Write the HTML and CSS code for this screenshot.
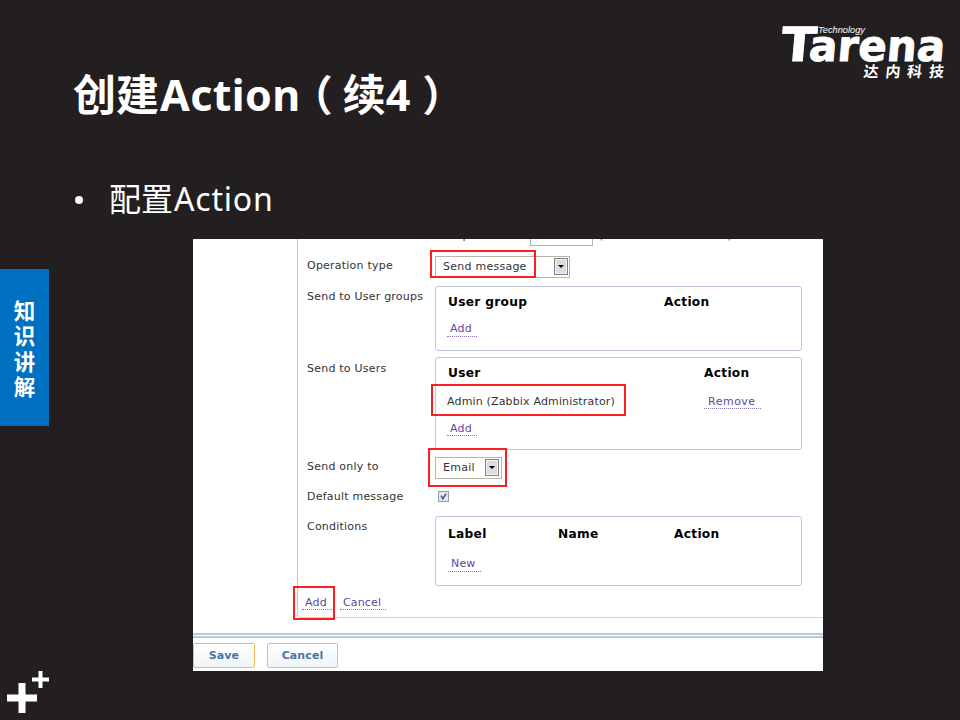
FILE: index.html
```html
<!DOCTYPE html>
<html lang="zh-CN">
<head>
<meta charset="utf-8">
<title>创建Action（续4）</title>
<link rel="stylesheet" href="styles.css">
</head>
<body>
<div class="slide">
  <header class="top">
    <div class="heading">
      <h1>创建<span class="latin">Action</span><span class="paren open">（</span>续4<span class="paren close">）</span></h1>
      <p class="bullet"><i class="dot"></i>配置<span>Action</span></p>
    </div>
    <svg class="logo" width="170" height="62" viewBox="0 0 170 62">
      <g fill="#fff">
        <g transform="translate(0 41) skewX(-5)">
          <text class="brand" x="-2" y="0" font-size="47" textLength="35" lengthAdjust="spacingAndGlyphs">T</text>
          <text class="brand" x="26" y="-.5" font-size="43" textLength="136" lengthAdjust="spacingAndGlyphs">arena</text>
        </g>
        <text class="tech" x="36" y="12.5" textLength="47" lengthAdjust="spacingAndGlyphs">Technology</text>
        <text class="cn" transform="translate(81 57) skewX(-6)" x="0 22 43.5 65.5" y="0">达内科技</text>
      </g>
    </svg>
  </header>
  <main class="middle">
    <aside class="tab"><span>知</span><span>识</span><span>讲</span><span>解</span></aside>
    <section class="panel">
      <div class="form">
        <div class="row step"><div class="cut"><span class="cut-label">Step duration</span><i class="input"></i><span class="cut-hint">(0 - use action default)</span></div></div>
        <div class="row line"><label>Operation type</label><div class="select wide"><span>Send message</span><i class="arrow"></i></div><b class="mark m-type"></b></div>
        <div class="row groups"><label>Send to User groups</label>
          <div class="box"><div class="cols c-groups"><strong>User group</strong><strong>Action</strong></div>
          <a class="link">Add</a></div></div>
        <div class="row users"><label>Send to Users</label>
          <div class="box"><div class="cols c-users"><strong>User</strong><strong>Action</strong></div>
          <div class="cols c-users entry"><span class="admin">Admin (Zabbix Administrator)</span><a class="link remove">Remove</a></div>
          <a class="link">Add</a></div><b class="mark m-user"></b></div>
        <div class="row line"><label>Send only to</label><div class="select"><span>Email</span><i class="arrow"></i></div><b class="mark m-mail"></b></div>
        <div class="row check"><label>Default message</label><svg class="tick" width="11" height="11" viewBox="0 0 11 11"><rect x=".5" y=".5" width="10" height="10" fill="#e5e8ec" stroke="#969da5"/><path d="M3 4.7 4.8 7.8 8.2 2.6" fill="none" stroke="#3e5ea5" stroke-width="1.6"/></svg></div>
        <div class="row conditions"><label>Conditions</label>
          <div class="box"><div class="cols c-cond"><strong>Label</strong><strong>Name</strong><strong>Action</strong></div>
          <a class="link new">New</a></div></div>
        <div class="row actions"><a class="link">Add</a><a class="link cancel">Cancel</a><b class="mark m-add"></b></div>
      </div>
      <div class="rule"></div>
      <div class="buttons"><button class="save">Save</button><button>Cancel</button></div>
    </section>
  </main>
  <footer>
    <svg width="60" height="49" viewBox="0 0 60 49"><path d="M7 27H37M22 12V42" stroke="#fff" stroke-width="7"/><path d="M32 8.5H49M40.5 0V17" stroke="#fff" stroke-width="4"/></svg>
  </footer>
</div>
</body>
</html>
```
FILE: styles.css
```css
* { box-sizing: border-box; }
body { margin: 0; background: #231f20; color: #fff; font-family: "Noto Sans", "Noto Sans CJK SC", sans-serif; }
.slide { width: 960px; height: 720px; overflow: hidden; }
.top { height: 239px; display: flex; justify-content: space-between; padding: 20px 12px 0 73px; }
h1 { margin: 43px 0 0; height: 64px; font-size: 43px; line-height: 64px; font-weight: 700; white-space: nowrap; }
.latin { margin-left: 1px; letter-spacing: .4px; }
.open { margin-left: -10px; margin-right: 10px; }
.close { margin-left: 12px; }
.paren { font-size: 42px; font-weight: 700; }
.bullet { display: flex; align-items: center; height: 50px; margin: 47px 0 0; font-size: 32px; line-height: 50px; font-weight: 400; }
.bullet span { margin-left: 1px; letter-spacing: .8px; }
.dot { width: 8px; height: 8px; border-radius: 50%; background: #fff; margin: 2px 26px 0 2px; }
.logo { overflow: visible; flex: none; margin-right: -4px; }
.brand { font-family: "DejaVu Sans", sans-serif; font-weight: 700; stroke: #fff; stroke-width: .9px; }
.tech { font: italic 400 9.5px "Liberation Sans", sans-serif; }
.cn { font: 700 15px "Noto Sans CJK SC", sans-serif; }
.middle { display: flex; height: 432px; }
.tab { display: flex; flex-direction: column; align-items: center; width: 49px; height: 157px; margin-top: 30px; padding-top: 28px; background: #0070c0; font: 700 21.5px/25.3px "Noto Sans CJK SC", sans-serif; }
.panel { width: 630px; height: 432px; margin-left: 144px; overflow: hidden; background: #fff; color: #333; font: 11px "DejaVu Sans", sans-serif; letter-spacing: .16px; }
.form { width: 530px; height: 379px; margin-left: 104px; border-left: 1px solid #bac4e3; border-bottom: 1px solid #cbd1e8; border-bottom-left-radius: 4px; }
.row { position: relative; display: grid; grid-template-columns: 137px 367px; align-items: start; }
.row label { padding: 1px 0 0 9px; line-height: 30px; letter-spacing: .22px; white-space: nowrap; }
.row.step { display: block; height: 12px; overflow: hidden; }
.cut { display: flex; margin-top: -12px; height: 19px; line-height: 17px; padding-left: 146px; white-space: nowrap; }
.cut-label { width: 86px; }
.input { width: 63px; height: 19px; border: 1px solid #b6b5a5; }
.cut-hint { margin-left: 6px; letter-spacing: .3px; }
.line { height: 30px; align-items: center; }
.line label { padding-top: 0; }
.groups { height: 71px; }
.users { height: 100px; }
.users label { padding-top: 2px; }
.check { height: 29px; }
.check label { padding-top: 0; }
.conditions { height: 76px; }
.select { display: flex; align-items: center; justify-content: space-between; width: 67px; height: 22px; margin-top: 1px; padding: 0 2px 0 7px; border: 1px solid #b6b5a5; line-height: 13px; }
.select span { letter-spacing: .25px; }
.wide { width: 135px; padding-right: 1px; }
.arrow { position: relative; width: 14px; height: 17px; border: 1px solid #7d8088; background: #dcdcdc; box-shadow: inset 0 0 0 1px #f4f4f4; }
.arrow::after { content: ""; position: absolute; left: 3px; top: 6px; border: 3px solid transparent; border-top-color: #000; border-bottom: 0; }
.box { height: 65px; margin-top: 5px; border: 1px solid #bdc6e3; border-radius: 3px; }
.users .box { height: 93px; }
.conditions .box { height: 70px; }
.cols { display: grid; padding-left: 12px; height: 31px; line-height: 31px; }
.cols strong { font-size: 12.2px; letter-spacing: .3px; color: #000; }
.c-groups { grid-template-columns: 216px 1fr; }
.c-users { grid-template-columns: 256px 1fr; }
.c-cond { grid-template-columns: 110px 116px 1fr; height: 35px; line-height: 35px; }
.entry { height: 25px; line-height: 25px; }
.admin { margin-left: -1px; }
.link { display: block; width: 30px; height: 16px; margin: 3px 0 0 11px; padding-left: 3px; border-bottom: 1px dotted #8577b5; color: #5b4a9b; line-height: 16px; }
.users .box > .link { margin-top: 6px; line-height: 17px; }
.entry .remove { width: 57px; margin: 4px 0 0 0; padding-left: 4px; letter-spacing: .5px; line-height: 17px; }
.new { width: 33px; margin: 4px 0 0 12px; }
.actions { display: flex; }
.actions .link { margin: 7px 0 0 4px; line-height: 17px; }
.actions .cancel { width: 46px; margin-left: 8px; }
.tick { margin: 9px 0 0 3px; }
.mark { position: absolute; border: 2px solid #fb1d20; }
.m-type { left: 132px; top: -1px; width: 106px; height: 28px; }
.m-user { left: 133px; top: 32px; width: 195px; height: 32px; }
.m-mail { left: 130px; top: -4px; width: 79px; height: 39px; }
.m-add { left: -5px; top: -1px; width: 42px; height: 34px; }
.rule { height: 5px; margin-top: 15px; border-top: 2px solid #b9cad9; border-bottom: 2px solid #b9cad9; }
.buttons { display: flex; gap: 12px; margin-top: 5px; }
button { width: 71px; height: 25px; padding: 0; border: 1px solid #b4c4d4; border-radius: 2px; background: linear-gradient(#fff, #f0f5f9); color: #4876a3; font: 700 11px "DejaVu Sans", sans-serif; letter-spacing: .1px; }
.save { width: 62px; border-color: #f7b84c; }
footer { height: 49px; }
footer svg { display: block; }
```
